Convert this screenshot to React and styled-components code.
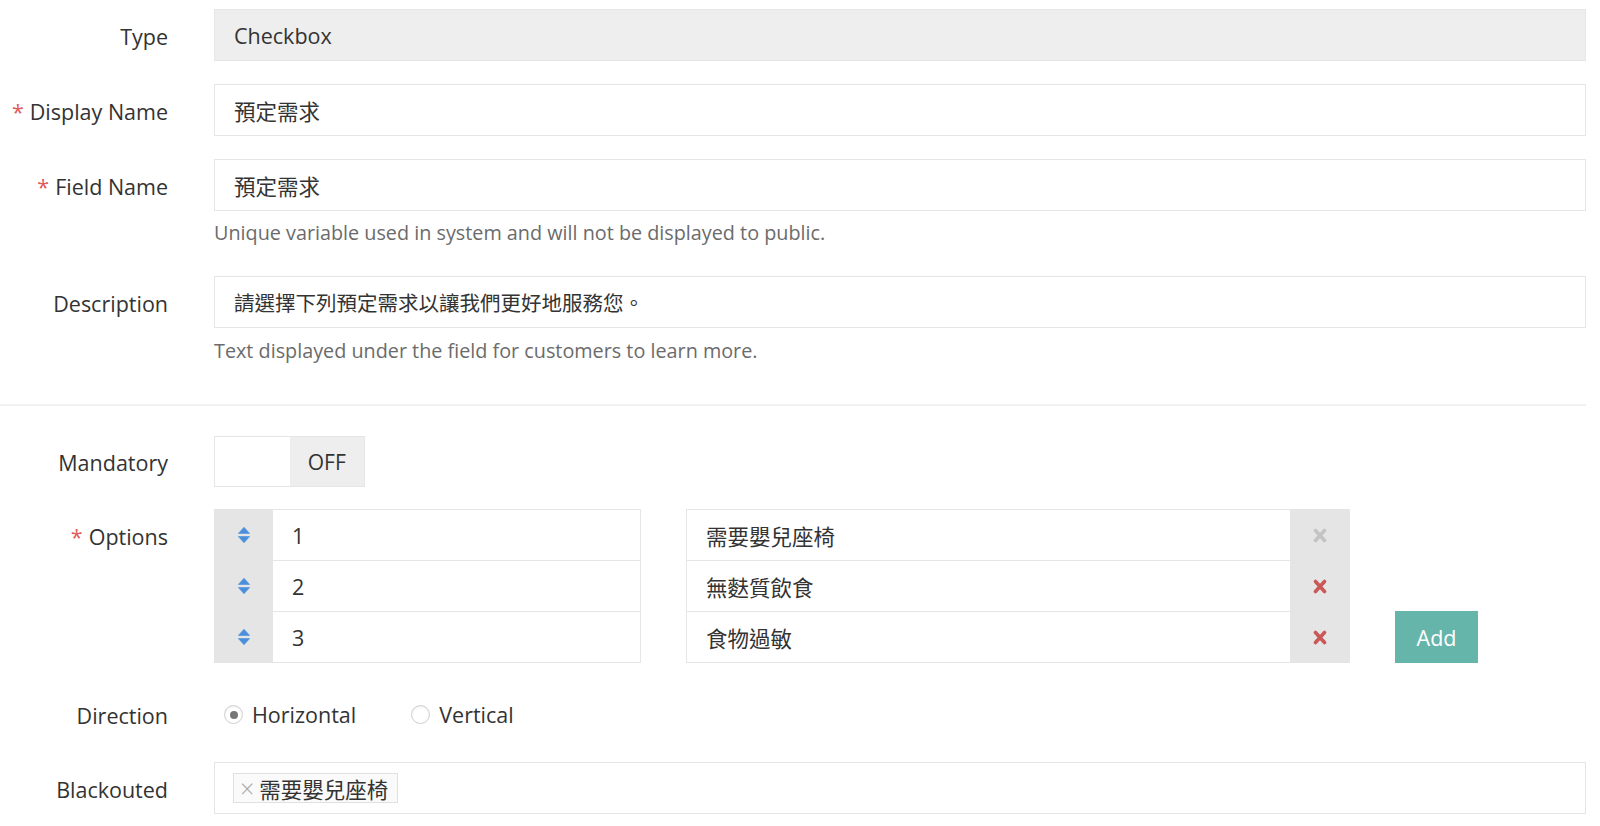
import React from "react";
import styled, { createGlobalStyle } from "styled-components";

const GlobalStyle = createGlobalStyle`
  html, body {
    margin: 0;
    padding: 0;
    background: #ffffff;
  }
  body {
    font-family: "Open Sans", "Noto Sans CJK TC", sans-serif;
    color: #333333;
  }
  * { box-sizing: border-box; }
`;

const Page = styled.div`
  width: 1600px;
  padding: 9px 14px 0 0;
`;

const Section = styled.div``;

const Divider = styled.div`
  height: 2px;
  background: #f2f2f2;
  margin: 33px 0 30px 0;
`;

const Row = styled.div`
  display: grid;
  grid-template-columns: 168px 1fr;
  column-gap: 46px;
  align-items: start;
  margin-bottom: ${(p) => (p.$mb !== undefined ? p.$mb : 23)}px;
  padding-top: ${(p) => p.$pt || 0}px;
`;

const Label = styled.div`
  text-align: right;
  font-size: 21.5px;
  height: ${(p) => p.$h || 52}px;
  line-height: ${(p) => (p.$h || 52) - 3}px;
  padding-top: 3px;
  color: #333;
  white-space: nowrap;
`;

const Star = styled.span`
  color: #e05b5b;
  margin-right: 6px;
`;

const Field = styled.div`
  height: 52px;
  display: flex;
  align-items: center;
  padding: 0 19px;
  border: 1px solid #e6e6e6;
  background: ${(p) => (p.$disabled ? "#eeeeee" : "#ffffff")};
  font-size: ${(p) => p.$fs || 21.5}px;
  color: #333;
  white-space: nowrap;
  overflow: hidden;
`;

const Help = styled.div`
  font-size: 19.8px;
  line-height: 26px;
  color: #6b6b6b;
  margin: ${(p) => p.$mt || 9}px 0 7px 0;
`;

const Toggle = styled.div`
  display: flex;
  width: 151px;
  height: 51px;
  border: 1px solid #e6e6e6;
`;

const ToggleBlank = styled.div`
  flex: 1;
  background: #fff;
`;

const ToggleOff = styled.div`
  flex: 1;
  background: #eeeeee;
  display: flex;
  align-items: center;
  justify-content: center;
  font-size: 21px;
  color: #333;
`;

const OptionRow = styled.div`
  display: grid;
  grid-template-columns: 427px 664px 83px;
  column-gap: 45px;
  margin-top: ${(p) => (p.$first ? 0 : -1)}px;
`;

const Group = styled.div`
  display: flex;
  height: 52px;
  border: 1px solid #e6e6e6;
`;

const Handle = styled.div`
  width: 59px;
  margin: -1px 0 -1px -1px;
  background: #e5e5e5;
  display: flex;
  align-items: center;
  justify-content: center;
`;

const GroupText = styled.div`
  flex: 1;
  display: flex;
  align-items: center;
  padding: 0 19px;
  font-size: 21.5px;
  color: #333;
`;

const RemoveCell = styled.div`
  width: 60px;
  margin: -1px -1px -1px 0;
  background: #e5e5e5;
  display: flex;
  align-items: center;
  justify-content: center;
`;

const AddButton = styled.button`
  height: 52px;
  border: none;
  background: #66b5ab;
  color: #ffffff;
  font-family: "Open Sans", sans-serif;
  font-size: 21.5px;
  padding: 0;
  cursor: pointer;
`;

const RadioGroup = styled.div`
  display: flex;
  align-items: center;
  height: 53px;
  padding-left: 10px;
  gap: 55px;
`;

const RadioItem = styled.label`
  display: flex;
  align-items: center;
  gap: 9px;
  font-size: 21.5px;
  color: #333;
`;

const RadioCircle = styled.span`
  width: 19px;
  height: 19px;
  border-radius: 50%;
  border: 1px solid #cfcfcf;
  background: #fff;
  box-shadow: inset 0 1px 2px rgba(0, 0, 0, 0.08);
  display: flex;
  align-items: center;
  justify-content: center;
  &::after {
    content: "";
    width: 8px;
    height: 8px;
    border-radius: 50%;
    background: ${(p) => (p.$checked ? "#777" : "transparent")};
  }
`;

const TagBox = styled.div`
  height: 52px;
  border: 1px solid #e6e6e6;
  display: flex;
  align-items: center;
  padding: 0 18px;
`;

const Tag = styled.span`
  display: inline-flex;
  align-items: center;
  height: 30px;
  padding: 0 9px 0 6px;
  border: 1px solid #e0e0e0;
  background: #fafafa;
  font-size: 21.5px;
  color: #333;
  gap: 5px;
`;

const TagX = styled.span`
  color: #aaa;
  font-size: 25px;
  font-weight: 300;
  line-height: 1;
`;

const SortIcon = () => (
  <svg width="12" height="16" viewBox="0 0 12 16">
    <path d="M6 0.3 L11.7 6.5 L0.3 6.5 Z" fill="#4a8fdc" strokeLinejoin="round" stroke="#4a8fdc" strokeWidth="0.6" />
    <path d="M0.3 9.5 L11.7 9.5 L6 15.7 Z" fill="#4a8fdc" strokeLinejoin="round" stroke="#4a8fdc" strokeWidth="0.6" />
  </svg>
);

const TimesIcon = ({ color }) => (
  <svg width="14" height="15" viewBox="0 0 14 15">
    <path d="M2.5 2.5 L11.5 12.5 M11.5 2.5 L2.5 12.5" stroke={color} strokeWidth="3.6" strokeLinecap="round" />
  </svg>
);

const options = [
  { n: "1", label: "需要嬰兒座椅", disabled: true },
  { n: "2", label: "無麩質飲食", disabled: false },
  { n: "3", label: "食物過敏", disabled: false },
];

export default function App() {
  return (
    <>
      <GlobalStyle />
      <Page>
        <Section>
          <Row>
            <Label>Type</Label>
            <Field $disabled>Checkbox</Field>
          </Row>
          <Row>
            <Label><Star>*</Star>Display Name</Label>
            <Field>預定需求</Field>
          </Row>
          <Row>
            <Label><Star>*</Star>Field Name</Label>
            <div>
              <Field>預定需求</Field>
              <Help>Unique variable used in system and will not be displayed to public.</Help>
            </div>
          </Row>
          <Row $mb={0}>
            <Label>Description</Label>
            <div>
              <Field $fs={20.5}>請選擇下列預定需求以讓我們更好地服務您。</Field>
              <Help $mt={10}>Text displayed under the field for customers to learn more.</Help>
            </div>
          </Row>
        </Section>
        <Divider />
        <Section>
          <Row $mb={22}>
            <Label $h={51}>Mandatory</Label>
            <Toggle>
              <ToggleBlank />
              <ToggleOff>OFF</ToggleOff>
            </Toggle>
          </Row>
          <Row>
            <Label><Star>*</Star>Options</Label>
            <div>
              {options.map((o, i) => (
                <OptionRow key={o.n} $first={i === 0}>
                  <Group>
                    <Handle><SortIcon /></Handle>
                    <GroupText>{o.n}</GroupText>
                  </Group>
                  <Group>
                    <GroupText>{o.label}</GroupText>
                    <RemoveCell>
                      <TimesIcon color={o.disabled ? "#c4c4c4" : "#c95858"} />
                    </RemoveCell>
                  </Group>
                  {i === options.length - 1 ? <AddButton>Add</AddButton> : <span />}
                </OptionRow>
              ))}
            </div>
          </Row>
          <Row $pt={2} $mb={21}>
            <Label $h={53}>Direction</Label>
            <RadioGroup>
              <RadioItem><RadioCircle $checked />Horizontal</RadioItem>
              <RadioItem><RadioCircle />Vertical</RadioItem>
            </RadioGroup>
          </Row>
          <Row $mb={0}>
            <Label>Blackouted</Label>
            <TagBox>
              <Tag><TagX>×</TagX>需要嬰兒座椅</Tag>
            </TagBox>
          </Row>
        </Section>
      </Page>
    </>
  );
}
